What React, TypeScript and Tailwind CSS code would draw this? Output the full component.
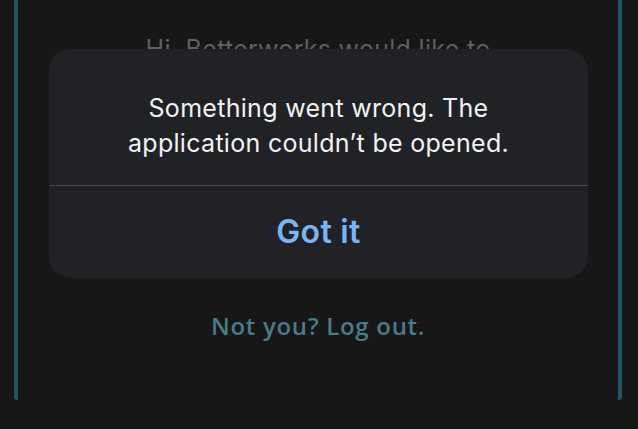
import React from "react";

export default function App() {
  return (
    <div className="relative w-[638px] h-[429px] overflow-hidden bg-[#171717]">
      <div className="ml-[14px] w-[608px] h-[400px] border-x-4 border-[#235460] rounded-b-[3px] flex flex-col items-center">
        <div
          className="pt-[35px] h-[64px] text-[25px] leading-[28px] tracking-[0.3px] text-[#5f5f5f]"
          style={{ fontFamily: "Inter, 'Noto Sans', sans-serif" }}
        >
          Hi, Betterworks would like to
        </div>
        <div className="mt-[156px] w-[520px] h-[56px] rounded-[12px] border-2 border-[#235460]" />
        <div
          className="mt-[36px] text-[24px] leading-[28px] font-semibold tracking-[0.7px] text-[#4a7b88]"
          style={{ fontFamily: "'Open Sans', Lato, sans-serif" }}
        >
          Not you? Log out.
        </div>
      </div>

      <div
        className="absolute left-[49px] top-[49px] w-[539px] h-[229px] rounded-[22px] bg-[#212226] flex flex-col"
        style={{ fontFamily: "Inter, 'Noto Sans', sans-serif" }}
      >
        <div className="h-[136px] pt-[42px] text-center text-[25px] leading-[35px] tracking-[0.3px] text-[#f2f2f2]">
          <div>Something went wrong. The</div>
          <div>application couldn’t be opened.</div>
        </div>
        <div className="h-px bg-[#48494c]" />
        <div className="flex-1 flex items-center justify-center">
          <span className="text-[32px] leading-[36px] font-semibold tracking-[0.3px] text-[#7bb4f5]">Got it</span>
        </div>
      </div>
    </div>
  );
}
